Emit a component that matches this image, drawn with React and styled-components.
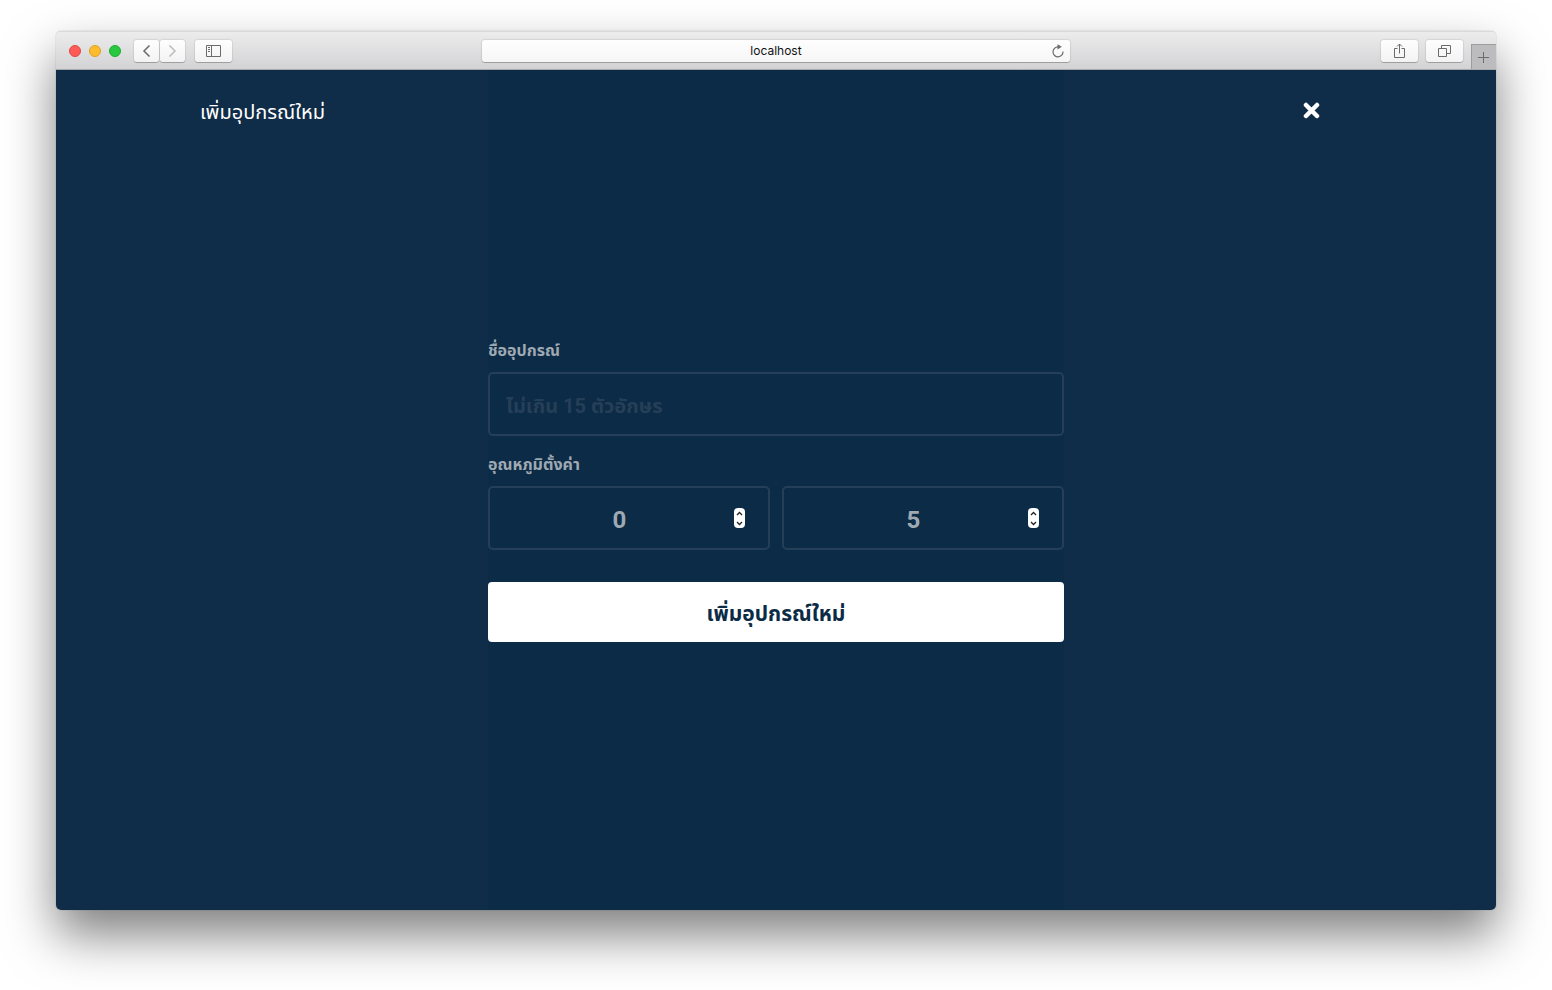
import React, { useState } from "react";
import styled, { createGlobalStyle } from "styled-components";

const GlobalStyle = createGlobalStyle`
  * { box-sizing: border-box; }
  body { margin: 0; background: #fff; }
  button, input { font: inherit; }
`;

const thai = `Roboto, "Noto Sans Thai", "Noto Sans", sans-serif`;

const Desktop = styled.main`
  min-height: 100vh;
  padding: 31px 56px 80px;
  display: flex;
  font-family: ${thai};
`;

const Window = styled.div`
  flex: 1;
  display: flex;
  flex-direction: column;
  border-radius: 5px;
  overflow: hidden;
  box-shadow: 0 0 1px rgba(0, 0, 0, 0.5), 0 25px 50px rgba(0, 0, 0, 0.5);
`;

const Toolbar = styled.header`
  height: 39px;
  display: grid;
  grid-template-columns: 1fr 588px 1fr;
  background: linear-gradient(#ececed, #d3d3d5);
  border-top: 1px solid #dadada;
  border-bottom: 1px solid #a9a9ab;
`;

const Tools = styled.div`
  display: flex;
  align-items: center;
  justify-content: ${(p) => (p.$end ? "flex-end" : "flex-start")};
  padding-left: 13px;
  gap: 8px;
`;

const Lights = styled.div`
  display: flex;
  gap: 8px;
  margin-right: 5px;
`;

const Light = styled.button`
  width: 12px;
  height: 12px;
  padding: 0;
  border: 1px solid ${(p) => p.$edge};
  border-radius: 50%;
  background: ${(p) => p.$fill};
`;

const Pair = styled.div`
  display: flex;
  gap: 1px;
  margin-right: 2px;
`;

const ToolButton = styled.button`
  width: ${(p) => (p.$narrow ? 25 : 37)}px;
  height: 22px;
  padding: 0;
  display: grid;
  place-items: center;
  border: 0;
  border-radius: 3px;
  background: linear-gradient(#fefefe, #f3f3f3);
  box-shadow: 0 0 1px 1px rgba(0, 0, 0, 0.08), 0 1px 0 rgba(0, 0, 0, 0.2);
  color: ${(p) => (p.$faint ? "#bcbcbc" : "#6b6b6b")};
`;

const Address = styled.div`
  align-self: center;
  display: grid;
  grid-template-columns: 24px 1fr 24px;
  align-items: center;
  height: 22px;
  border-radius: 3px;
  background: linear-gradient(#fefefe, #f6f6f6);
  box-shadow: 0 0 1px 1px rgba(0, 0, 0, 0.08), 0 1px 0 rgba(0, 0, 0, 0.2);
`;

const AddressInput = styled.input`
  grid-column: 2;
  min-width: 0;
  padding: 0;
  border: 0;
  outline: 0;
  background: none;
  color: #111;
  font: 12px/16px Inter, sans-serif;
  text-align: center;
`;

const PlainButton = styled.button`
  padding: 0;
  border: 0;
  background: none;
  display: grid;
  place-items: center;
  color: #6b6b6b;
`;

const NewTab = styled(PlainButton)`
  align-self: flex-end;
  width: 25px;
  height: 25px;
  border-left: 1px solid #9c9c9e;
  border-top: 1px solid #9c9c9e;
  background: #bcbcbe;
`;

const Page = styled.section`
  flex: 1;
  display: flex;
  flex-direction: column;
  background: linear-gradient(90deg, #0f2c48 30%, #0c2b46 30% 70%, #0f2c48 70%);
`;

const PageHeader = styled.header`
  padding: 24px 10%;
  height: 84px;
  display: flex;
  align-items: flex-start;
  justify-content: space-between;
`;

const Title = styled.h1`
  margin: 0;
  color: #fff;
  font-size: 20px;
  line-height: 36px;
  font-weight: 400;
`;

const CloseButton = styled(PlainButton)`
  height: 32px;
  margin-right: 32px;
  color: #fff;
`;

const Form = styled.form`
  width: 40%;
  margin: auto;
  padding-bottom: 84px;
  display: flex;
  flex-direction: column;
`;

const Group = styled.fieldset`
  min-width: 0;
  margin: 0 0 ${(p) => (p.$last ? 32 : 16)}px;
  padding: 0;
  border: 0;
`;

const Label = styled.label`
  display: block;
  height: 34px;
  color: #9fa9b3;
  font-size: 16px;
  line-height: 26px;
  font-weight: 700;
`;

const Box = styled.div`
  flex: 1;
  min-width: 0;
  height: 64px;
  padding: 0 ${(p) => (p.$number ? "23px 0 15px" : "16px")};
  display: flex;
  align-items: center;
  border: 2px solid #263f58;
  border-radius: 5px;
`;

const Field = styled.input`
  flex: 1;
  min-width: 0;
  width: 100%;
  height: 60px;
  padding: 4px 0 0;
  border: 0;
  outline: 0;
  background: none;
  color: #9fa9b3;
  font-size: ${(p) => (p.type === "number" ? 24 : 20)}px;
  font-weight: 700;
  text-align: ${(p) => (p.type === "number" ? "center" : "left")};
  appearance: textfield;
  &::placeholder { color: #263f58; opacity: 1; }
  &::-webkit-inner-spin-button { display: none; }
`;

const Range = styled.div`
  display: flex;
  gap: 12px;
`;

const Stepper = styled.div`
  width: 11px;
  height: 20px;
  display: flex;
  flex-direction: column;
  border-radius: 4px;
  background: #fff;
`;

const Step = styled(PlainButton)`
  flex: 1;
  color: #222;
`;

const Submit = styled.button`
  height: 60px;
  padding: 4px 0 0;
  border: 0;
  border-radius: 4px;
  background: #fff;
  color: #0c2b46;
  font-size: 21px;
  font-weight: 700;
`;

const Icon = ({ w, h, children, stroke = 1 }) => (
  <svg width={w} height={h} viewBox={`0 0 ${w} ${h}`} fill="none" stroke="currentColor" strokeWidth={stroke} aria-hidden="true">
    {children}
  </svg>
);

function NumberBox({ id, label, initial }) {
  const [value, setValue] = useState(initial);
  return (
    <Box $number>
      <Field id={id} type="number" aria-label={label} value={value} onChange={(e) => setValue(e.target.value)} />
      <Stepper>
        <Step type="button" aria-label="เพิ่ม" onClick={() => setValue(Number(value) + 1)}>
          <Icon w={7} h={5} stroke={1.3}><path d="M1 4 3.5 1.5 6 4" /></Icon>
        </Step>
        <Step type="button" aria-label="ลด" onClick={() => setValue(Number(value) - 1)}>
          <Icon w={7} h={5} stroke={1.3}><path d="M1 1 3.5 3.5 6 1" /></Icon>
        </Step>
      </Stepper>
    </Box>
  );
}

export default function App() {
  return (
    <>
      <GlobalStyle />
      <Desktop>
        <Window>
          <Toolbar>
            <Tools>
              <Lights>
                <Light aria-label="Close window" $fill="#fc5b57" $edge="#e2463f" />
                <Light aria-label="Minimize" $fill="#fdbc2e" $edge="#e0a023" />
                <Light aria-label="Zoom" $fill="#28c940" $edge="#1bac2c" />
              </Lights>
              <Pair>
                <ToolButton $narrow aria-label="Back"><Icon w={9} h={12} stroke={1.5}><path d="M7.5 .5 2 6l5.500 5.500" /></Icon></ToolButton>
                <ToolButton $narrow $faint aria-label="Forward"><Icon w={9} h={12} stroke={1.5}><path d="M1.500 .5 7 6l-5.500 5.500" /></Icon></ToolButton>
              </Pair>
              <ToolButton aria-label="Sidebar">
                <Icon w={15} h={12}><path d="M.5 .5h14v11H.5zM5.5 .5v11M2 2.5h2M2 4.5h2M2 6.5h2" /></Icon>
              </ToolButton>
            </Tools>
            <Address>
              <AddressInput aria-label="Address" defaultValue="localhost" />
              <PlainButton aria-label="Reload">
                <Icon w={12} h={14} stroke={1.2}>
                  <path d="M7 2.800H6A5 5 0 1 0 11 7.500" />
                  <path d="M5.500 .2 9.800 2.800 5.500 5.400z" fill="currentColor" stroke="none" />
                </Icon>
              </PlainButton>
            </Address>
            <Tools $end>
              <ToolButton aria-label="Share">
                <Icon w={11} h={16}><path d="M3.500 5.500H.5v9h10v-9h-3M5.500 10.500V1M3 3.500 5.500 1 8 3.500" /></Icon>
              </ToolButton>
              <ToolButton aria-label="Show tabs">
                <Icon w={13} h={12}><path d="M.5 3.500h8v8h-8zM3.500 3.500v-3h9v8h-4" /></Icon>
              </ToolButton>
              <NewTab aria-label="New tab"><Icon w={12} h={11}><path d="M5.500 0v11M0 5.500h11" /></Icon></NewTab>
            </Tools>
          </Toolbar>
          <Page>
            <PageHeader>
              <Title>เพิ่มอุปกรณ์ใหม่</Title>
              <CloseButton aria-label="ปิด">
                <Icon w={17} h={17} stroke={4.500}><path d="M3 3 14 14M14 3 3 14" strokeLinecap="round" /></Icon>
              </CloseButton>
            </PageHeader>
            <Form onSubmit={(e) => e.preventDefault()}>
              <Group>
                <Label htmlFor="name">ชื่ออุปกรณ์</Label>
                <Box><Field id="name" type="text" maxLength={15} placeholder="ไม่เกิน 15 ตัวอักษร" /></Box>
              </Group>
              <Group $last>
                <Label htmlFor="low">อุณหภูมิตั้งค่า</Label>
                <Range>
                  <NumberBox id="low" label="อุณหภูมิตั้งค่า ต่ำสุด" initial={0} />
                  <NumberBox id="high" label="อุณหภูมิตั้งค่า สูงสุด" initial={5} />
                </Range>
              </Group>
              <Submit type="submit">เพิ่มอุปกรณ์ใหม่</Submit>
            </Form>
          </Page>
        </Window>
      </Desktop>
    </>
  );
}
